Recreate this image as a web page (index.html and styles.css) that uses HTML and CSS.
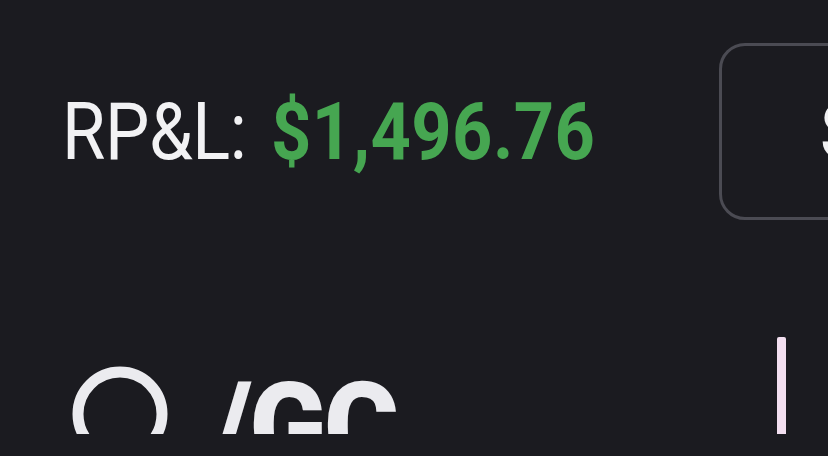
FILE: index.html
```html
<!DOCTYPE html>
<html><head>
  <meta charset="utf-8">
  <title>RP&amp;L</title>
  <link rel="stylesheet" href="styles.css">
</head>
<body>
<div class="screen">
  <div class="summary">
    <div class="pnl"><span class="label">RP&amp;L:</span><span class="gain">$1,496.76</span></div>
    <div class="sell-btn"><span>S</span></div>
  </div>
  <div class="ticker-row">
    <svg class="ring" width="96" height="96" viewBox="0 0 96 96"><circle cx="48" cy="48" r="42" fill="none" stroke="#ebebef" stroke-width="11"/></svg>
    <div class="symbol">/GC</div>
    <div class="cursor"></div>
  </div>
</div>
</body>
</html>
```

FILE: styles.css
```css
html, body {
  margin: 0;
  padding: 0;
  background: #1b1b20;
  overflow: hidden;
}

.screen {
  width: 828px;
  height: 434px;
  overflow: hidden;
  font-family: Roboto, "Liberation Sans", sans-serif;
}

.summary {
  display: grid;
  grid-template-columns: 657px 300px;
  align-items: center;
  padding: 43px 0 0 62px;
}

/* the source font is narrower than Roboto, so squeeze it */
.pnl {
  display: flex;
  gap: 28px;
  font-size: 80px;
  line-height: 1;
  white-space: nowrap;
  transform: scaleX(0.88);
  transform-origin: left center;
}
.label { color: #f2f2f4; letter-spacing: -0.5px; }
.gain  { color: #46a651; font-weight: 700; letter-spacing: 0.5px; }

.sell-btn {
  box-sizing: border-box;
  height: 177px;
  border: 3px solid #4b4b53;
  border-radius: 26px;
  display: flex;
  align-items: center;
  padding-left: 98px;
  font-size: 80px;
  font-weight: 700;
  color: #f2f2f4;
}

.ticker-row {
  display: flex;
  align-items: flex-start;
  margin-top: 117px;
  padding-left: 72px;
}

.ring {
  flex: none;
  margin-top: 29px;
}

.symbol {
  margin: 30px 0 0 44px;
  font-size: 120px;
  line-height: 1;
  font-weight: 900;
  color: #ebebef;
  letter-spacing: -3px;
  transform: scaleX(0.95);
  transform-origin: left top;
}

.cursor {
  flex: none;
  width: 9px;
  height: 100px;
  margin-left: auto;
  margin-right: 42px;
  background: #f3dff0;
  border-radius: 2px;
}
```
